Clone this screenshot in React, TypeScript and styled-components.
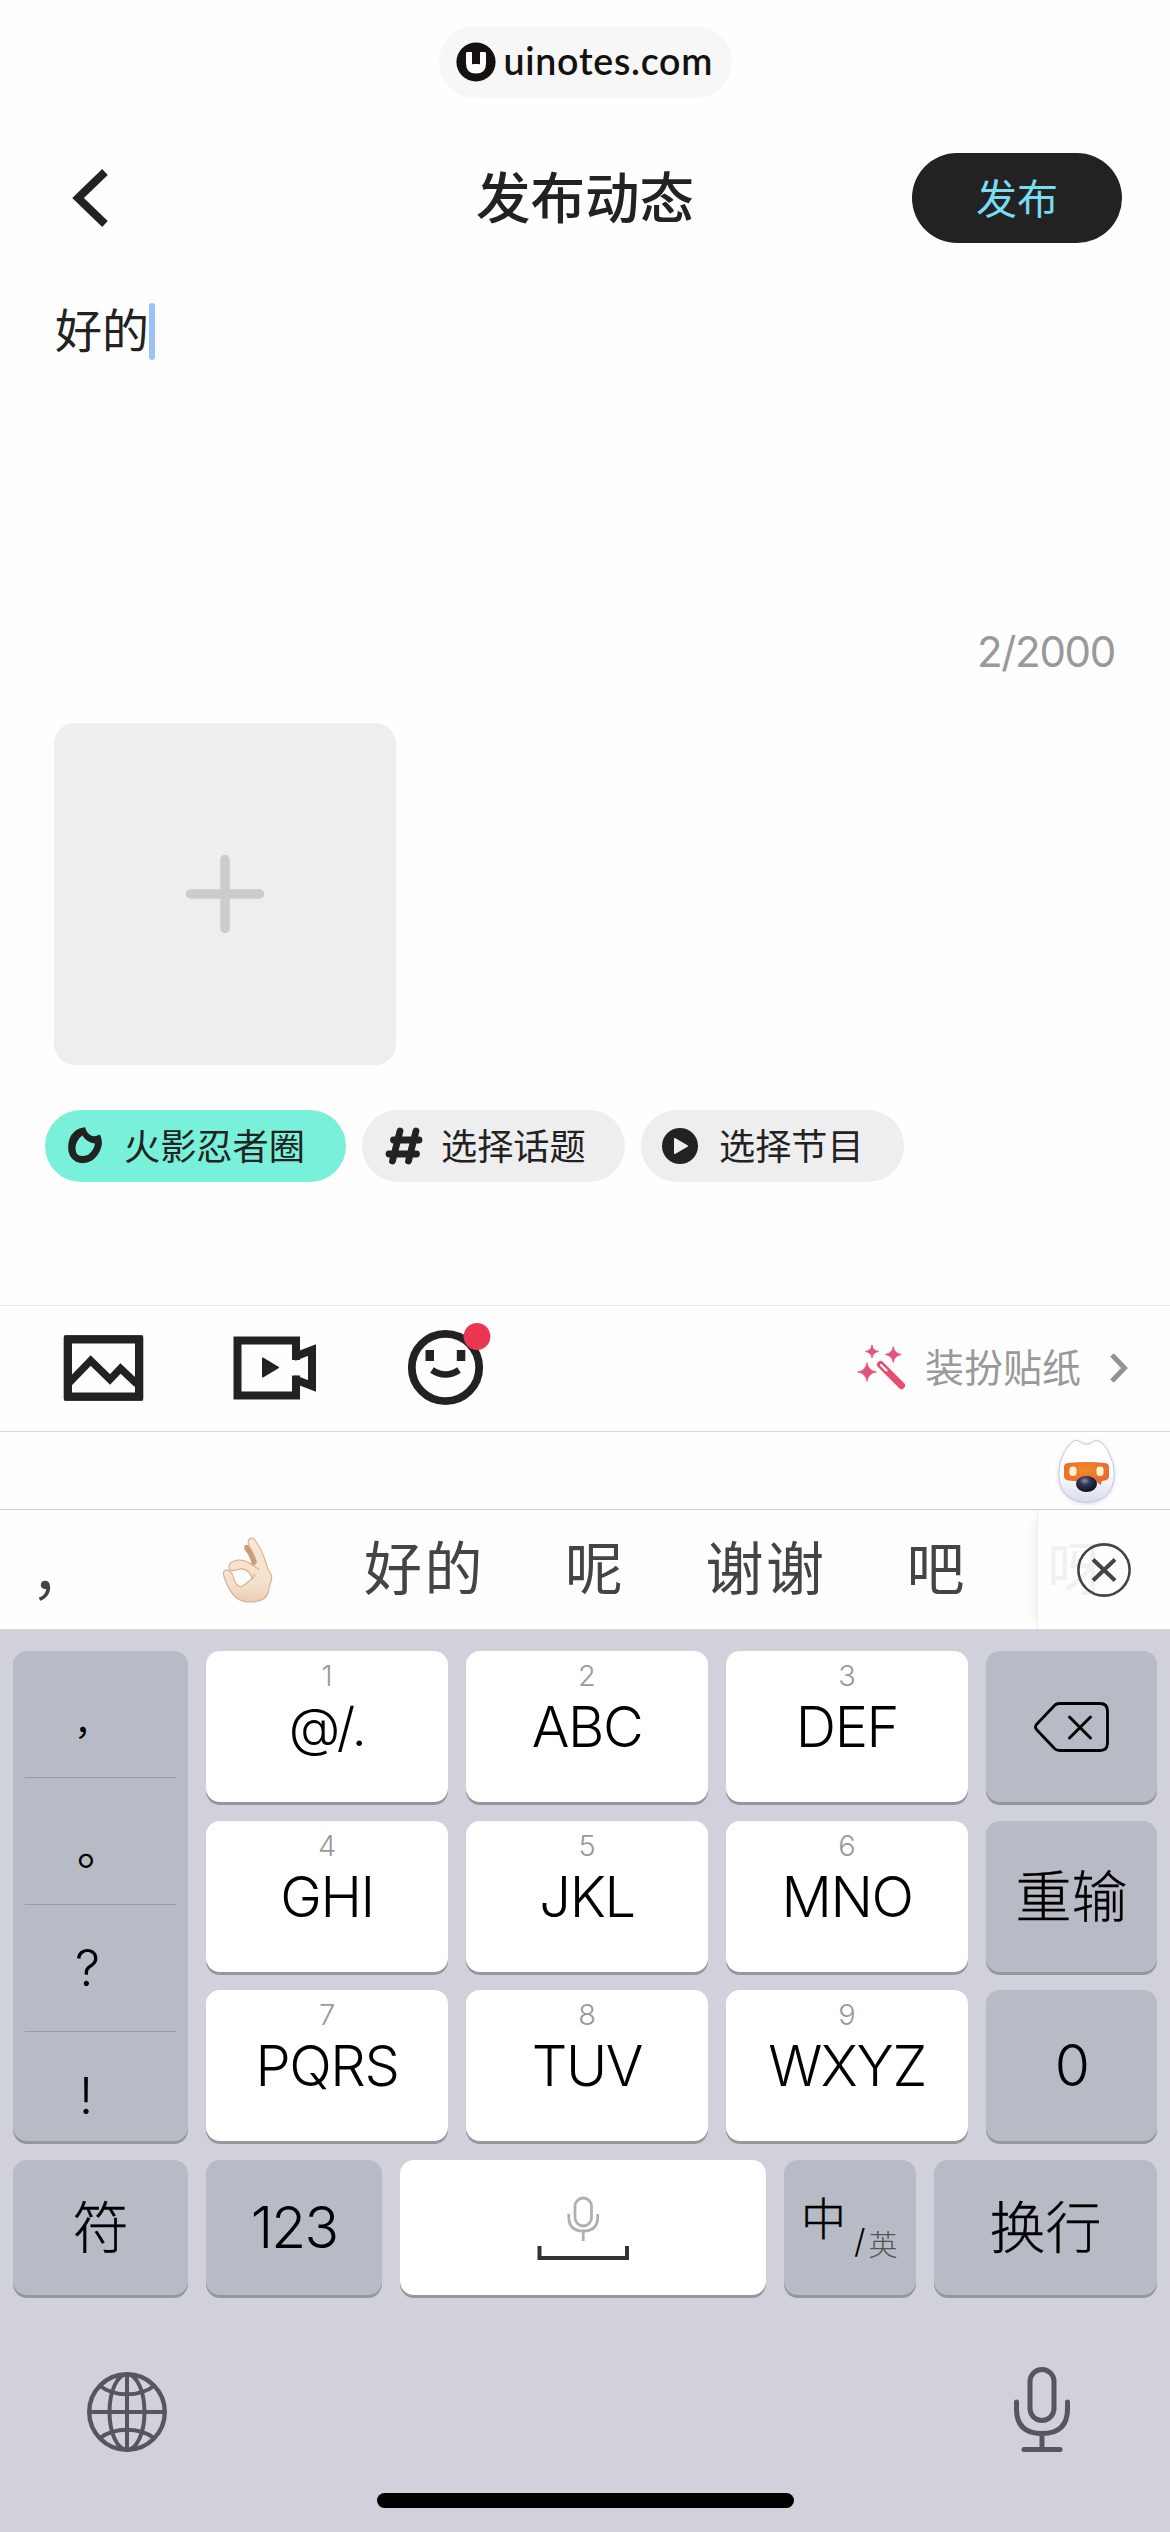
import React from "react";
import styled, { createGlobalStyle } from "styled-components";

const cjk = `"Noto Sans CJK SC", "Noto Sans", sans-serif`;
const latin = `Inter, "Noto Sans CJK SC", sans-serif`;

const GlobalStyle = createGlobalStyle`
  *, *::before, *::after { box-sizing: border-box; }
  html, body { margin: 0; padding: 0; background: #fefefe; }
  button { border: 0; padding: 0; margin: 0; background: none; font: inherit; color: inherit; }
  svg { display: block; flex: none; }
`;

const Screen = styled.main`
  width: 1170px;
  height: 2532px;
  display: flex;
  flex-direction: column;
  overflow: hidden;
  background: #fefefe;
  color: #222;
  font-family: ${cjk};
`;

/* ---------- top ---------- */

const StatusArea = styled.div`
  height: 120px;
  padding-top: 26px;
  display: flex;
  justify-content: center;
  align-items: flex-start;
`;

const SitePill = styled.div`
  width: 293px;
  height: 72px;
  border-radius: 36px;
  background: #f7f7f7;
  display: flex;
  align-items: center;
  padding-left: 17px;
  gap: 8px;
`;

const SiteName = styled.span`
  font-family: Lato, sans-serif;
  font-weight: 600;
  font-size: 37.5px;
  letter-spacing: 0.75px;
  line-height: 48px;
  color: #15110f;
  margin-top: -2px;
`;

const Header = styled.header`
  height: 156px;
  padding: 0 48px;
  display: grid;
  grid-template-columns: 1fr auto 1fr;
  align-items: center;
`;

const BackButton = styled.button`
  justify-self: start;
  margin-left: 23px;
`;

const Title = styled.h1`
  margin: 0;
  padding-bottom: 6px;
  font-size: 54.5px;
  font-weight: 500;
  line-height: 72px;
  color: #222;
`;

const PublishButton = styled.button`
  justify-self: end;
  width: 210px;
  height: 90px;
  border-radius: 45px;
  background: #222;
  color: #7adcf0;
  font-size: 41px;
  line-height: 86px;
  padding-bottom: 4px;
  text-align: center;
`;

/* ---------- editor ---------- */

const Editor = styled.section`
  height: 424px;
  padding: 26px 55px 23px 55px;
  display: flex;
  flex-direction: column;
  justify-content: space-between;
`;

const EditorLine = styled.div`
  display: flex;
  align-items: center;
  height: 58px;
  font-size: 47px;
  line-height: 52px;
  color: #222;
`;

const EditorText = styled.span`
  padding-bottom: 6px;
`;

const Caret = styled.span`
  width: 6px;
  height: 57px;
  border-radius: 3px;
  background: #9bc2f8;
`;

const Counter = styled.div`
  align-self: flex-end;
  font-family: ${latin};
  font-size: 42px;
  font-weight: 400;
  line-height: 50px;
  letter-spacing: -1.3px;
  color: #999;
`;

const Attachments = styled.section`
  height: 605px;
  padding: 23px 0 0 45px;
`;

const AddTile = styled.button`
  width: 342px;
  height: 342px;
  margin-left: 9px;
  border-radius: 21px;
  background: #eee;
  display: flex;
  align-items: center;
  justify-content: center;
`;

const Chips = styled.div`
  display: flex;
  gap: 16px;
  margin-top: 45px;
`;

const Chip = styled.button<{ $active?: boolean; $width: number; $gap: number }>`
  width: ${(p) => p.$width}px;
  height: 72px;
  border-radius: 36px;
  background: ${(p) => (p.$active ? "#79f0da" : "#eee")};
  color: #222;
  display: flex;
  align-items: center;
  padding-left: 20px;
  gap: ${(p) => p.$gap}px;
  font-size: 36.2px;
`;

const ChipLabel = styled.span`
  line-height: 60px;
  padding-bottom: 4px;
`;

/* ---------- toolbar ---------- */

const Toolbar = styled.div`
  height: 126px;
  border-top: 1px solid #e6e6e6;
  display: flex;
  align-items: center;
  padding: 0 41px 2px 60px;
`;

const Tools = styled.div`
  display: flex;
  gap: 84px;
  flex: 1;
`;

const StickerLink = styled.button`
  display: flex;
  align-items: center;
  color: #999;
  font-size: 39px;
  line-height: 60px;
`;

const StickerLabel = styled.span`
  margin: 0 28px 0 19px;
  padding-bottom: 6px;
`;

const MascotRow = styled.div`
  height: 78px;
  border-top: 1px solid #d3d4d6;
  display: flex;
  justify-content: flex-end;
  padding: 1px 50px 0 0;
`;

const Candidates = styled.div`
  height: 120px;
  border-top: 1px solid #cdcfd1;
  display: flex;
  color: #444;
`;

const CandidateList = styled.div`
  width: 1037px;
  display: flex;
  align-items: center;
  padding-left: 31px;
  gap: 80px;
`;

const Candidate = styled.span<{ $width?: number; $lift?: number }>`
  flex: none;
  width: ${(p) => (p.$width ? `${p.$width}px` : "auto")};
  padding-bottom: ${(p) => p.$lift ?? 9}px;
  font-size: 58px;
  letter-spacing: 2.5px;
  line-height: 90px;
  white-space: nowrap;
`;

const CandidateClose = styled.div`
  flex: 1;
  display: flex;
  align-items: center;
  padding-left: 9px;
  border-left: 1px solid #ececec;
  box-shadow: -12px 0 12px -10px rgba(0, 0, 0, 0.08);
`;

const FadedCandidate = styled.span`
  width: 28px;
  overflow: visible;
  white-space: nowrap;
  font-size: 58px;
  line-height: 90px;
  padding-bottom: 9px;
  color: #f1f1f1;
`;

/* ---------- keyboard ---------- */

const Keyboard = styled.section`
  flex: 1;
  padding: 22px 13px 0;
  background: #d0d1da;
  color: #000;
  display: flex;
  flex-direction: column;
`;

const KeyGrid = styled.div`
  display: grid;
  grid-template-columns: 175px 242px 242px 242px 171px;
  grid-template-rows: 152px 151px 151px;
  gap: 18px;
`;

const KeyBase = styled.button<{ $dark?: boolean }>`
  border-radius: 14px;
  background: ${(p) => (p.$dark ? "#b7bbc5" : "#fff")};
  box-shadow: 0 3px 0 #94979b;
  display: flex;
  align-items: center;
  justify-content: center;
`;

const LetterKey = styled(KeyBase)`
  height: 151px;
  flex-direction: column;
  justify-content: flex-start;
  font-family: ${latin};
  font-weight: 300;
`;

const KeyDigit = styled.span`
  margin-top: 8px;
  font-size: 29px;
  line-height: 34px;
  color: #999;
`;

const KeyLetters = styled.span<{ $symbols?: boolean }>`
  font-size: ${(p) => (p.$symbols ? 53 : 56)}px;
  line-height: 68px;
  letter-spacing: -1.4px;
`;

const SideKey = styled(KeyBase)`
  height: 151px;
`;

const Punctuation = styled.div`
  grid-row: 1 / span 3;
  height: 490px;
  border-radius: 14px;
  background: #b7bbc5;
  box-shadow: 0 3px 0 #94979b;
  padding: 0 12px;
`;

const PunctuationCell = styled.div<{ $top: number; $left: number }>`
  height: 127px;
  padding: ${(p) => p.$top}px 0 0 ${(p) => p.$left}px;
  border-bottom: 1px solid #989ca4;
  font-family: ${latin};
  font-weight: 300;
  font-size: 50px;
  line-height: 60px;
  &:last-child { border-bottom: 0; height: 109px; }
`;

const FullWidthMark = styled.div<{ $size: number }>`
  font-family: ${cjk};
  font-size: ${(p) => p.$size}px;
  font-weight: 400;
`;

const KeyText = styled.span<{ $latin?: boolean }>`
  font-family: ${(p) => (p.$latin ? latin : cjk)};
  font-weight: 300;
  font-size: ${(p) => (p.$latin ? 57 : 56)}px;
  letter-spacing: ${(p) => (p.$latin ? -1.8 : 0)}px;
  line-height: 76px;
  padding-bottom: ${(p) => (p.$latin ? 0 : 8)}px;
  -webkit-text-stroke: ${(p) => (p.$latin ? 0 : 0.35)}px #000;
  white-space: nowrap;
`;

const BottomRow = styled.div`
  display: grid;
  grid-template-columns: 175px 176px 366px 132px 223px;
  gap: 18px;
  height: 135px;
  margin-top: 19px;
`;

const SpaceKey = styled(KeyBase)`
  padding-top: 2px;
`;

const LanguageKey = styled(KeyBase)`
  align-items: flex-start;
  justify-content: flex-start;
  padding: 29px 0 0 17px;
  font-weight: 300;
`;

const LangMain = styled.span`
  font-size: 45px;
  line-height: 56px;
  -webkit-text-stroke: 0.35px #000;
`;

const LangSlash = styled.span`
  font-family: ${latin};
  font-size: 33px;
  line-height: 40px;
  margin: 32px 3px 0 8px;
`;

const LangSub = styled.span`
  font-size: 29px;
  line-height: 36px;
  margin-top: 36px;
  color: #555;
`;

const KeyboardFooter = styled.footer`
  flex: 1;
  display: flex;
  flex-direction: column;
  align-items: center;
  justify-content: space-between;
  padding: 69px 0 24px;
`;

const FooterIcons = styled.div`
  width: 100%;
  height: 92px;
  display: flex;
  justify-content: space-between;
  align-items: flex-end;
  padding: 0 82px 0 70px;
`;

const HomeIndicator = styled.div`
  width: 417px;
  height: 15px;
  border-radius: 8px;
  background: #000;
`;

/* ---------- icons ---------- */

const LogoIcon = () => (
  <svg width="40" height="40" viewBox="0 0 40 40">
    <circle cx="20" cy="20" r="19.6" fill="#15110f" />
    <path d="M10 11.200Q10 10 11.200 10H16V22H24V10H28.800Q30 10 30 11.200V21.500Q30 31.500 20 31.500Q10 31.500 10 21.500Z" fill="#fff" />
    <path d="M16.800 9.500V22.800L20.300 19.600L23.800 22.800V9.500Z" fill="#15110f" />
  </svg>
);

const BackIcon = () => (
  <svg width="40" height="64" viewBox="70 166 40 64">
    <path d="M104 172L77 198L104 224" fill="none" stroke="#222" strokeWidth="8" />
  </svg>
);

const PlusIcon = () => (
  <svg width="80" height="80" viewBox="0 0 80 80">
    <path d="M40 5.500V74.500M5.500 40H74.500" stroke="#ccc" strokeWidth="9.500" strokeLinecap="round" />
  </svg>
);

const FlameIcon = () => (
  <svg width="40" height="40" viewBox="65 1126 40 40">
    <path
      d="M85.200 1127.200Q86.300 1133 91.500 1135.800Q95.500 1137 99.800 1134.500Q103 1140 101.300 1147Q99 1155.500 92 1160.500Q84 1165 76 1161.800Q68 1157 68.100 1147Q68.300 1137 74.500 1131.500Q79 1127.600 85.200 1127.200Z"
      fill="#222"
    />
    <path d="M82.300 1135.500Q87 1142.500 95 1143.500Q94 1150 88.500 1154.500Q82 1157.700 77.500 1154.500Q74.500 1151 76 1144.500Q78 1138.500 82.300 1135.500Z" fill="#79f0da" />
  </svg>
);

const HashIcon = () => (
  <svg width="44" height="40" viewBox="381 1126 44 40">
    <path d="M399 1131L391.500 1161M415 1131L407.500 1161M392.500 1140H418M388 1154H415.500" stroke="#222" strokeWidth="6.800" strokeLinecap="round" />
  </svg>
);

const PlayIcon = () => (
  <svg width="38" height="38" viewBox="0 0 38 38">
    <circle cx="19" cy="19" r="18" fill="#222" />
    <path d="M14 12L26 19L14 26Z" fill="#eee" stroke="#eee" strokeWidth="2" strokeLinejoin="round" />
  </svg>
);

const ImageIcon = () => (
  <svg width="86" height="90" viewBox="60 1323 86 90">
    <rect x="68" y="1339.500" width="71" height="57" fill="none" stroke="#222" strokeWidth="8" />
    <rect x="64.200" y="1335.700" width="78.600" height="64.600" rx="1.500" fill="none" stroke="#222" strokeWidth="1" />
    <path d="M69 1383L90.700 1360.500L110 1379.500L120.500 1368.500L137 1384" fill="none" stroke="#222" strokeWidth="7.500" />
  </svg>
);

const VideoIcon = () => (
  <svg width="90" height="90" viewBox="230 1323 90 90">
    <path d="M296 1360V1340.500H237.500V1395.500H296V1375.500" fill="none" stroke="#222" strokeWidth="8" />
    <path d="M294 1357L312 1350V1386L294 1379" fill="none" stroke="#222" strokeWidth="8" />
    <path d="M263 1358.500L278 1367.500L263 1376.500Z" fill="#222" stroke="#222" strokeWidth="2" strokeLinejoin="round" />
  </svg>
);

const SmileIcon = () => (
  <svg width="90" height="90" viewBox="404 1323 90 90">
    <circle cx="445.500" cy="1367.500" r="33.700" fill="none" stroke="#222" strokeWidth="7.800" />
    <path d="M425.500 1350h8.500v11h-8.500zM456.800 1350h8.500v11h-8.500z" fill="#222" />
    <path d="M432 1370Q438.500 1374.500 445.500 1374.500Q452.500 1374.500 459 1370" fill="none" stroke="#222" strokeWidth="6.500" />
    <circle cx="477" cy="1336.500" r="13.400" fill="#eb3652" />
  </svg>
);

const star = (x: number, y: number, r: number) =>
  `M${x} ${y - r}Q${x + r * 0.14} ${y - r * 0.14} ${x + r} ${y}Q${x + r * 0.14} ${y + r * 0.14} ${x} ${y + r}Q${x - r * 0.14} ${y + r * 0.14} ${x - r} ${y}Q${x - r * 0.14} ${y - r * 0.14} ${x} ${y - r}Z`;

const WandIcon = () => (
  <svg width="50" height="48" viewBox="856 1344 50 48">
    <path d={star(872, 1351.5, 6.5) + star(893.3, 1354.5, 8) + star(867, 1372, 9.3)} fill="#e2557a" stroke="#e2557a" strokeWidth="0.800" />
    <path d="M880.500 1364.500L901.500 1385.500" stroke="#e64e70" strokeWidth="7" strokeLinecap="round" />
    <path d="M881 1365L886.500 1370.500" stroke="#fefefe" strokeWidth="2.200" strokeLinecap="round" />
  </svg>
);

const ForwardIcon = () => (
  <svg width="20" height="34" viewBox="0 0 20 34">
    <path d="M3 4L15.500 17L3 30" fill="none" stroke="#939393" strokeWidth="5" />
  </svg>
);

const MascotIcon = () => (
  <svg width="66" height="76" viewBox="1054 1433 66 76">
    <defs>
      <linearGradient id="face" x1="0" y1="0" x2="0" y2="1">
        <stop offset="0.500" stopColor="#fff" />
        <stop offset="1" stopColor="#d9dcea" />
      </linearGradient>
      <radialGradient id="visor" cx="0.450" cy="0.350" r="0.600">
        <stop offset="0" stopColor="#f28a2a" />
        <stop offset="1" stopColor="#e86a2e" />
      </radialGradient>
      <radialGradient id="nose" cx="0.420" cy="0.300" r="0.650">
        <stop offset="0" stopColor="#8c90a8" />
        <stop offset="0.400" stopColor="#30344f" />
        <stop offset="1" stopColor="#12142a" />
      </radialGradient>
      <filter id="soft" x="-20%" y="-20%" width="140%" height="140%">
        <feDropShadow dx="0" dy="1" stdDeviation="2" floodColor="#8f96bd" floodOpacity="0.350" />
      </filter>
    </defs>
    <path
      d="M1075 1440.500Q1078.500 1440 1081 1442.500Q1086.500 1446 1092 1442.500Q1094.500 1440 1098 1440.500Q1104 1443 1109 1453Q1114.300 1463 1114.300 1474Q1113.500 1501 1086.500 1502.500Q1059.500 1501 1058.700 1474Q1058.700 1463 1064 1453Q1069 1443 1075 1440.500Z"
      fill="url(#face)" stroke="#c3c6db" strokeWidth="1" filter="url(#soft)"
    />
    <path d="M1064 1467Q1064 1463.500 1068 1463Q1086.500 1461 1105 1463Q1109 1463.500 1109 1467V1476Q1109 1479.500 1105 1480.500L1102 1481L1100.500 1485L1096 1481.500Q1086 1482.500 1068 1480.500Q1064 1479.500 1064 1476Z" fill="url(#visor)" />
    <rect x="1069.500" y="1466.500" width="7" height="9.500" rx="3.200" fill="#fff3cf" />
    <rect x="1096.500" y="1466.500" width="7" height="9.500" rx="3.200" fill="#fff3cf" />
    <ellipse cx="1086.500" cy="1484" rx="10.500" ry="8" fill="url(#nose)" />
  </svg>
);

const OkHandIcon = () => (
  <svg width="60" height="70" viewBox="218 1534 60 70">
    <defs>
      <linearGradient id="skin" x1="0" y1="0" x2="0" y2="1">
        <stop offset="0" stopColor="#f8e6d3" />
        <stop offset="0.700" stopColor="#f5e0cb" />
        <stop offset="1" stopColor="#ebcdb2" />
      </linearGradient>
    </defs>
    <path d="M244.500 1545Q246.500 1542.500 249.500 1545.500Q256 1555 259 1566L252 1564Q250 1555 245.200 1549.500Q243.500 1547 244.500 1545Z" fill="#c99c78" />
    <path
      fillRule="evenodd"
      d="M248.500 1539Q251 1535.500 254.500 1538.500Q262 1548 266 1562Q267 1567 269.500 1570.500Q272.500 1574 271.500 1579Q269.500 1584 268.500 1591Q266 1599.500 255 1600.800Q243 1602 236.500 1597Q229 1590 226 1581Q222.500 1573 223.800 1570.500Q226 1567.500 230 1570Q233 1573 234 1578Q236 1585 241 1586Q246 1583 251 1578.500Q253 1575 249 1571.500Q244 1566.500 238 1568.500Q230 1571.500 229 1566.500Q228.500 1562 234 1560Q242 1557 251 1563Q255 1565.500 256.500 1561Q254.500 1553 249.500 1545.500Q247.500 1542 248.500 1539Z"
      fill="url(#skin)" stroke="#d6b08c" strokeWidth="1.100"
    />
    <path d="M251 1563L259 1568.500M252 1578Q254 1576 255 1573" fill="none" stroke="#d6b08c" strokeWidth="1.100" />
  </svg>
);

const CloseIcon = () => (
  <svg width="58" height="58" viewBox="-29 -29 58 58">
    <circle r="25.600" fill="none" stroke="#444" strokeWidth="2.600" />
    <path d="M-11 -10.500L11 10.500M11 -10.500L-11 10.500" stroke="#444" strokeWidth="4" />
  </svg>
);

const BackspaceIcon = () => (
  <svg width="80" height="56" viewBox="1031 1699 80 56">
    <path d="M1058.500 1703.500H1099Q1106.500 1703.500 1106.500 1711V1743Q1106.500 1750.500 1099 1750.500H1058.500Q1055 1750.500 1053 1748L1035.500 1729.500Q1033.500 1727 1035.500 1724.500L1053 1706Q1055 1703.500 1058.500 1703.500Z" fill="none" stroke="#000" strokeWidth="2.800" />
    <path d="M1068.500 1717L1089.500 1738M1089.500 1717L1068.500 1738" stroke="#000" strokeWidth="3" strokeLinecap="round" />
  </svg>
);

const SpaceIcon = () => (
  <svg width="92" height="66" viewBox="536.500 2196 92 66">
    <rect x="574.500" y="2198" width="16.500" height="28" rx="8.250" fill="none" stroke="#b0b0b0" strokeWidth="2.800" />
    <path d="M568.300 2214V2217Q568.300 2231 582.700 2231Q597.200 2231 597.200 2217V2214M582.700 2231V2241" fill="none" stroke="#b0b0b0" strokeWidth="2.800" />
    <path d="M539 2246V2258H626.500V2246" fill="none" stroke="#333" strokeWidth="4" />
  </svg>
);

const GlobeIcon = () => (
  <svg width="88" height="88" viewBox="-44 -44 88 88" fill="none" stroke="#54585d" strokeWidth="4">
    <circle r="37.800" strokeWidth="4.400" />
    <ellipse rx="17.500" ry="37.800" />
    <path d="M0 -38V38M-38 0H38" />
    <path d="M-27 -26Q-16 -17.700 0 -17.700Q16 -17.700 27 -26M-27 26Q-16 17.700 0 17.700Q16 17.700 27 26" />
  </svg>
);

const MicIcon = () => (
  <svg width="66" height="92" viewBox="1009 2363 66 92" fill="none" stroke="#54585d" strokeWidth="5" strokeLinecap="round">
    <rect x="1030" y="2368.500" width="24" height="51" rx="12" />
    <path d="M1016.500 2401V2408Q1016.500 2432.500 1042 2432.500Q1067.500 2432.500 1067.500 2408V2401M1042 2433V2448M1024 2448.500H1060" />
  </svg>
);

/* ---------- page ---------- */

type Letter = { digit: string; letters: string; symbols?: boolean };

const rows: { keys: Letter[]; side: React.ReactNode }[] = [
  {
    keys: [
      { digit: "1", letters: "@/.", symbols: true },
      { digit: "2", letters: "ABC" },
      { digit: "3", letters: "DEF" },
    ],
    side: <BackspaceIcon />,
  },
  {
    keys: [{ digit: "4", letters: "GHI" }, { digit: "5", letters: "JKL" }, { digit: "6", letters: "MNO" }],
    side: <KeyText>重输</KeyText>,
  },
  {
    keys: [{ digit: "7", letters: "PQRS" }, { digit: "8", letters: "TUV" }, { digit: "9", letters: "WXYZ" }],
    side: <KeyText $latin>0</KeyText>,
  },
];

export default function App() {
  return (
    <>
      <GlobalStyle />
      <Screen>
        <StatusArea>
          <SitePill>
            <LogoIcon />
            <SiteName>uinotes.com</SiteName>
          </SitePill>
        </StatusArea>

        <Header>
          <BackButton><BackIcon /></BackButton>
          <Title>发布动态</Title>
          <PublishButton>发布</PublishButton>
        </Header>

        <Editor>
          <EditorLine><EditorText>好的</EditorText><Caret /></EditorLine>
          <Counter>2/2000</Counter>
        </Editor>

        <Attachments>
          <AddTile><PlusIcon /></AddTile>
          <Chips>
            <Chip $active $width={301} $gap={19}><FlameIcon /><ChipLabel>火影忍者圈</ChipLabel></Chip>
            <Chip $width={263} $gap={15}><HashIcon /><ChipLabel>选择话题</ChipLabel></Chip>
            <Chip $width={263} $gap={20}><PlayIcon /><ChipLabel>选择节目</ChipLabel></Chip>
          </Chips>
        </Attachments>

        <Toolbar>
          <Tools>
            <ImageIcon />
            <VideoIcon />
            <SmileIcon />
          </Tools>
          <StickerLink>
            <WandIcon />
            <StickerLabel>装扮贴纸</StickerLabel>
            <ForwardIcon />
          </StickerLink>
        </Toolbar>

        <MascotRow><MascotIcon /></MascotRow>

        <Candidates>
          <CandidateList>
            <Candidate $width={107} $lift={2}>，</Candidate>
            <Candidate $width={66} $lift={0}><OkHandIcon /></Candidate>
            <Candidate>好的</Candidate>
            <Candidate>呢</Candidate>
            <Candidate>谢谢</Candidate>
            <Candidate>吧</Candidate>
          </CandidateList>
          <CandidateClose>
            <FadedCandidate>呀</FadedCandidate>
            <CloseIcon />
          </CandidateClose>
        </Candidates>

        <Keyboard>
          <KeyGrid>
            <Punctuation>
              <PunctuationCell $top={38} $left={49}><FullWidthMark $size={36}>，</FullWidthMark></PunctuationCell>
              <PunctuationCell $top={36} $left={52}><FullWidthMark $size={46}>。</FullWidthMark></PunctuationCell>
              <PunctuationCell $top={33} $left={50}>?</PunctuationCell>
              <PunctuationCell $top={34} $left={54}>!</PunctuationCell>
            </Punctuation>
            {rows.map((row, i) => (
              <React.Fragment key={i}>
                {row.keys.map((k) => (
                  <LetterKey key={k.digit}>
                    <KeyDigit>{k.digit}</KeyDigit>
                    <KeyLetters $symbols={k.symbols}>{k.letters}</KeyLetters>
                  </LetterKey>
                ))}
                <SideKey $dark>{row.side}</SideKey>
              </React.Fragment>
            ))}
          </KeyGrid>
          <BottomRow>
            <KeyBase $dark><KeyText>符</KeyText></KeyBase>
            <KeyBase $dark><KeyText $latin>123</KeyText></KeyBase>
            <SpaceKey><SpaceIcon /></SpaceKey>
            <LanguageKey $dark>
              <LangMain>中</LangMain>
              <LangSlash>/</LangSlash>
              <LangSub>英</LangSub>
            </LanguageKey>
            <KeyBase $dark><KeyText>换行</KeyText></KeyBase>
          </BottomRow>
          <KeyboardFooter>
            <FooterIcons>
              <GlobeIcon />
              <MicIcon />
            </FooterIcons>
            <HomeIndicator />
          </KeyboardFooter>
        </Keyboard>
      </Screen>
    </>
  );
}
